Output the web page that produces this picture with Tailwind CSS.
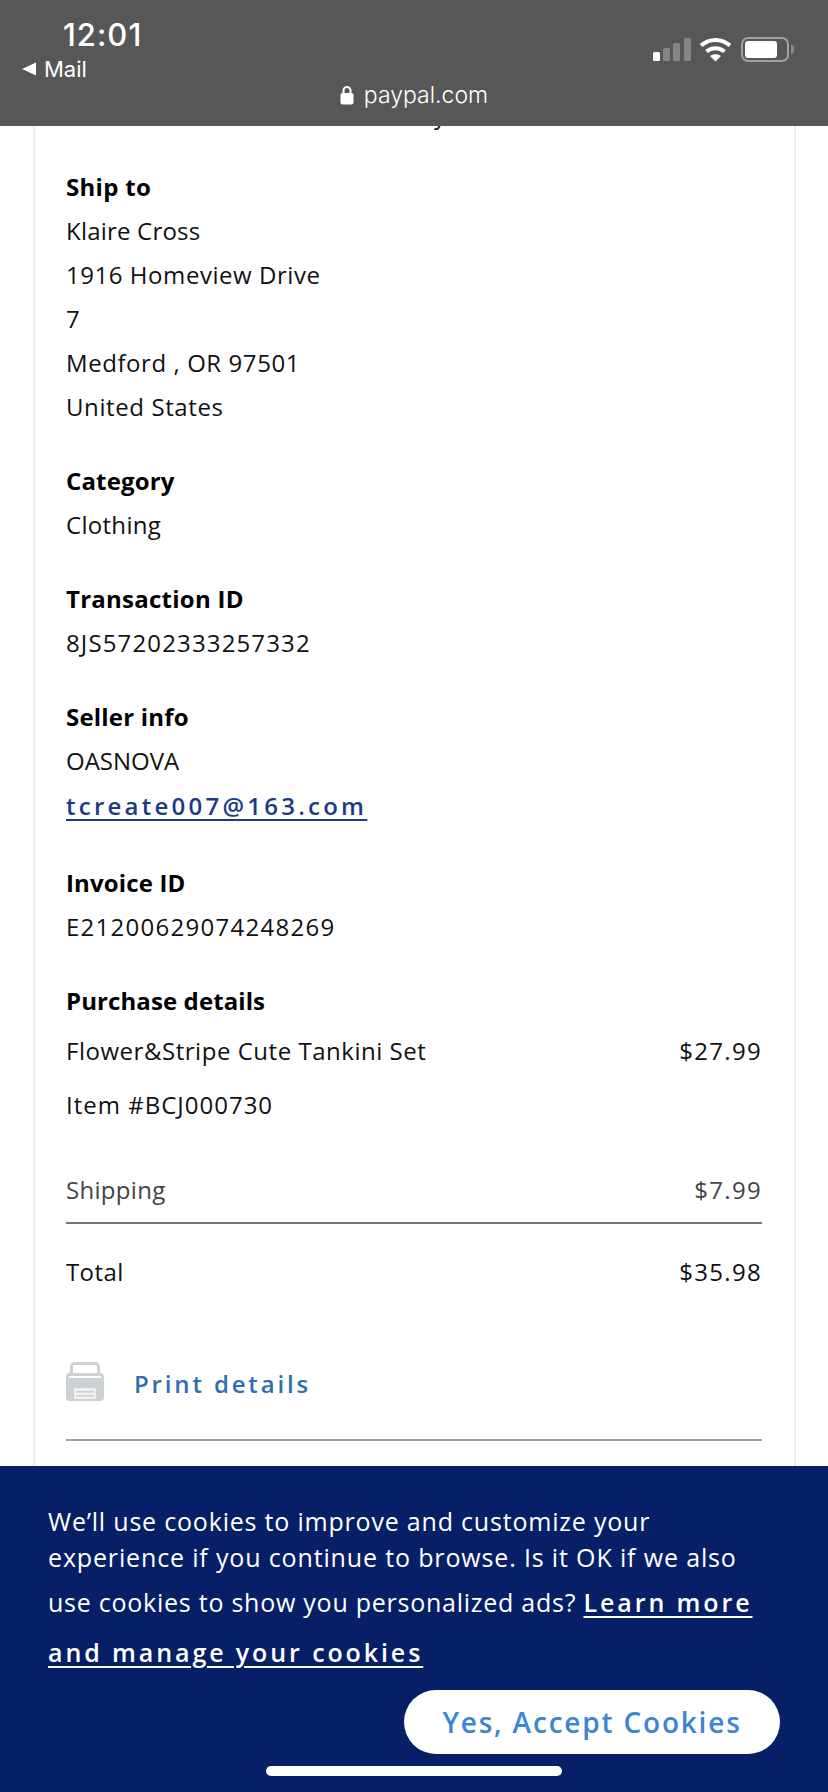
<!DOCTYPE html>
<html lang="en">
<head>
    <meta charset="UTF-8">
    <title>PayPal receipt</title>
    <meta name="viewport" content="width=device-width, initial-scale=1.0">
    <script src="https://cdn.jsdelivr.net/npm/@tailwindcss/browser@4"></script>
</head>
<body>

<div class="relative w-[828px] h-[1792px] overflow-hidden bg-white font-['Open_Sans',sans-serif] text-[24px] leading-[44px] text-[#111]">

    <!-- receipt card, scrolled under the browser bar -->
    <div class="ml-[33px] mr-[32px] h-full border-x-2 border-[#eceef0] pl-[31px] pr-[32px] pt-[93px]">
        <div class="mb-[28px] pl-[368px]">y</div>

        <div class="font-bold tracking-[0.3px] text-black">Ship to</div>
        <div class="tracking-[0.2px]">Klaire Cross</div>
        <div class="tracking-[0.55px]">1916 Homeview Drive</div>
        <div>7</div>
        <div class="tracking-[0.57px]">Medford , OR 97501</div>
        <div class="tracking-[0.6px]">United States</div>

        <div class="mt-[30px] font-bold tracking-[0.15px] text-black">Category</div>
        <div class="tracking-[0.3px]">Clothing</div>

        <div class="mt-[30px] font-bold tracking-[0.25px] text-black">Transaction ID</div>
        <div class="tracking-[1.14px]">8JS57202333257332</div>

        <div class="mt-[30px] font-bold tracking-[0.2px] text-black">Seller info</div>
        <div>OASNOVA</div>
        <a class="mt-[1px] block font-semibold tracking-[3.25px] text-[#1b3a87] underline underline-offset-4" href="#">tcreate007@163.com</a>

        <div class="mt-[33px] font-bold tracking-[0.15px] text-black">Invoice ID</div>
        <div class="tracking-[1.27px]">E21200629074248269</div>

        <div class="mt-[30px] font-bold tracking-[0.1px] text-black">Purchase details</div>
        <div class="mt-[6px] flex justify-between">
            <span class="tracking-[0.53px]">Flower&amp;Stripe Cute Tankini Set</span>
            <span class="tracking-[1.3px]">$27.99</span>
        </div>
        <div class="mt-[10px] tracking-[1px]">Item #BCJ000730</div>

        <div class="mt-[41px] flex justify-between border-b-2 border-[#777] pb-[10px] text-[#444]">
            <span class="tracking-[0.3px]">Shipping</span>
            <span class="tracking-[1.3px]">$7.99</span>
        </div>
        <div class="mt-[26px] flex justify-between">
            <span class="tracking-[0.4px]">Total</span>
            <span class="tracking-[1.3px]">$35.98</span>
        </div>

        <div class="mt-[68px] flex items-center gap-[30px]">
            <svg width="38" height="40" viewBox="0 0 38 40" class="mb-[4px] shrink-0">
                <rect x="5.500" y="1.500" width="27" height="16" rx="3" fill="none" stroke="#ccd1d4" stroke-width="3"/>
                <rect x="0" y="11" width="38" height="28" rx="4" fill="#ccd1d4"/>
                <rect x="3" y="14" width="32" height="2" fill="#fff"/>
                <rect x="8" y="26" width="22" height="11" fill="#eef0f1"/>
                <rect x="10" y="29" width="18" height="1.500" fill="#ccd1d4"/>
                <rect x="10" y="33" width="18" height="1.500" fill="#ccd1d4"/>
            </svg>
            <a class="font-semibold tracking-[2.85px] text-[#2f6fb0]" href="#">Print details</a>
        </div>
        <div class="mt-[33px] border-b-2 border-[#a3a3a3]"></div>
    </div>

    <!-- iOS status bar and address bar -->
    <div class="absolute inset-x-0 top-0 h-[126px] bg-[#575757] text-white">
        <div class="flex justify-between">
            <div class="pl-[22px]">
                <div class="pl-[41px] pt-[16px] text-[31px] leading-[38px] tracking-[1px] font-['Inter',sans-serif] font-medium">12:01</div>
                <div class="mt-[1px] flex items-center gap-[8px] text-[22px] leading-[28px] font-['Inter',sans-serif]">
                    <svg width="14" height="14" viewBox="0 0 14 14"><path d="M14 0.500v13L0 7z" fill="#fff"/></svg>
                    <span>Mail</span>
                </div>
            </div>
            <div class="flex items-start gap-[8px] pt-[37px] pr-[34px]">
                <svg width="38" height="24" viewBox="0 0 38 24">
                    <rect x="0" y="15" width="7" height="9" rx="1.500" fill="#fff"/>
                    <rect x="10" y="11" width="7" height="13" rx="1.500" fill="#858585"/>
                    <rect x="20" y="6" width="7" height="18" rx="1.500" fill="#858585"/>
                    <rect x="31" y="1" width="7" height="23" rx="1.500" fill="#858585"/>
                </svg>
                <svg width="33" height="25" viewBox="0 0 33 25" fill="none" stroke="#fff" stroke-width="4">
                    <path d="M2 8.500C10.500 1 22.500 1 31 8.500"/>
                    <path d="M7.500 14.500C12.500 10 20.500 10 25.500 14.500"/>
                    <path d="M16.500 24.500l-5.500-5.500c3-2.500 8-2.500 11 0z" fill="#fff" stroke="none"/>
                </svg>
                <div class="ml-[1px] flex items-center">
                    <div class="h-[25px] w-[48px] rounded-[7px] border-2 border-[#a0a0a0] p-[2px]">
                        <div class="h-full w-[32px] rounded-[3px] bg-white"></div>
                    </div>
                    <div class="ml-[2px] h-[9px] w-[3px] rounded-r-full bg-[#8a8a8a]"></div>
                </div>
            </div>
        </div>
        <div class="mt-[-3px] flex items-center justify-center gap-[10px] text-[23px] leading-[30px] font-['Inter',sans-serif] font-light">
            <svg width="14" height="20" viewBox="0 0 14 20">
                <path d="M3.500 9V5.500a3.500 3.500 0 0 1 7 0V9" fill="none" stroke="#fff" stroke-width="2"/>
                <rect x="0.500" y="8" width="13" height="11.500" rx="2" fill="#fff"/>
            </svg>
            <span>paypal.com</span>
        </div>
    </div>

    <!-- cookie banner -->
    <div class="absolute inset-x-0 bottom-0 h-[326px] bg-[#071f66] px-[48px] pt-[37px] text-[25px] tracking-[0.8px] text-white">
        <p class="leading-[36px]">We’ll use cookies to improve and customize your</p>
        <p class="leading-[36px] tracking-[0.85px]">experience if you continue to browse. Is it OK if we also</p>
        <p class="mt-[5px] leading-[44px] tracking-[0.75px]">use cookies to show you personalized ads? <a class="font-semibold tracking-[2.9px] underline underline-offset-4" href="#">Learn more</a></p>
        <p class="mt-[6px] leading-[44px]"><a class="font-semibold tracking-[2.9px] underline underline-offset-4" href="#">and manage your cookies</a></p>
        <div class="mt-[16px] flex justify-end">
            <button class="h-[64px] w-[376px] rounded-full bg-white text-[28px] font-semibold tracking-[1.8px] text-[#3d85d3]">Yes, Accept Cookies</button>
        </div>
        <div class="absolute bottom-[16px] left-[266px] h-[10px] w-[296px] rounded-full bg-white"></div>
    </div>
</div>

</body>
</html>
